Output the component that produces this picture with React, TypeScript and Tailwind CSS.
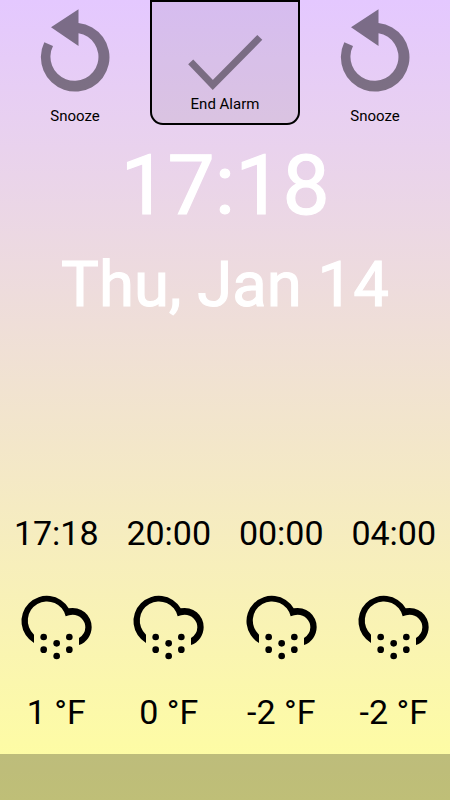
const forecast = [
  { time: '17:18', temp: '1 °F' },
  { time: '20:00', temp: '0 °F' },
  { time: '00:00', temp: '-2 °F' },
  { time: '04:00', temp: '-2 °F' },
];

function SnoozeIcon() {
  return (
    <svg viewBox="0 0 150 100" className="h-[100px] w-[150px] opacity-[0.46]">
      <path
        fill="#000"
        d="M51 27.3 L78.5 9.3 V23.1 A34.3 34.3 0 1 1 44.3 42.3 L53 46.1 A24 24 0 1 0 78.5 33.2 V46 Z"
      />
    </svg>
  );
}

function CheckIcon() {
  return (
    <svg viewBox="0 0 150 100" className="h-[100px] w-[150px] shrink-0 opacity-[0.43]">
      <path d="M40.7 61.8 L62.8 85 L109.8 37.4" fill="none" stroke="#000" strokeWidth="7" />
    </svg>
  );
}

function SnowCloudIcon() {
  return (
    <svg viewBox="0 0 336 270" className="h-[90px] w-[112px]">
      <path d="M102 189 A76 76 0 1 1 206 85 A57 57 0 0 1 275 142 A57 57 0 0 1 237 195 V174 A38 38 0 0 0 256 142 A38 38 0 0 0 218 104 Q207 104 197 109 A57.5 57.5 0 1 0 102 164 Z" />
      <circle cx="131" cy="171" r="10" />
      <circle cx="208" cy="171" r="10" />
      <circle cx="170" cy="190" r="10" />
      <circle cx="131" cy="209" r="10" />
      <circle cx="208" cy="209" r="10" />
      <circle cx="170" cy="228" r="10" />
    </svg>
  );
}

function SnoozeButton() {
  return (
    <button className="flex h-[125px] w-[150px] flex-col items-center">
      <SnoozeIcon />
      <span className="mt-2 text-[15px] leading-[17px]">Snooze</span>
    </button>
  );
}

export default function App() {
  return (
    <main className="flex h-[800px] w-[450px] flex-col overflow-hidden bg-linear-to-b/srgb from-[#e4c8ff] to-[#ffff9f] font-['Roboto',sans-serif] text-black">
      <div className="flex h-[125px]">
        <SnoozeButton />
        <button className="flex h-[125px] w-[150px] flex-col items-center rounded-b-[13px] border-2 border-black bg-black/6">
          <span className="-mt-[2px] h-[95px]">
            <CheckIcon />
          </span>
          <span className="-mt-px text-[15px] leading-5">End Alarm</span>
        </button>
        <SnoozeButton />
      </div>
      <header className="flex flex-col items-center text-white">
        <div className="mt-[11px] h-[100px] text-[84px] leading-[100px] [-webkit-text-stroke:1.1px_white]">17:18</div>
        <div className="mt-[9px] h-20 text-[63.5px] leading-[80px] whitespace-nowrap [-webkit-text-stroke:1.1px_white]">Thu, Jan 14</div>
      </header>
      <section className="mt-[188px] grid h-[241px] grid-cols-4">
        {forecast.map((item) => (
          <div key={item.time} className="flex flex-col items-center">
            <span className="text-[34px] leading-10">{item.time}</span>
            <div className="mt-[27px] mr-px">
              <SnowCloudIcon />
            </div>
            <span className="mt-[22px] text-[34px] leading-10">{item.temp}</span>
          </div>
        ))}
      </section>
      <footer className="h-[46px] bg-black/25" />
    </main>
  );
}
